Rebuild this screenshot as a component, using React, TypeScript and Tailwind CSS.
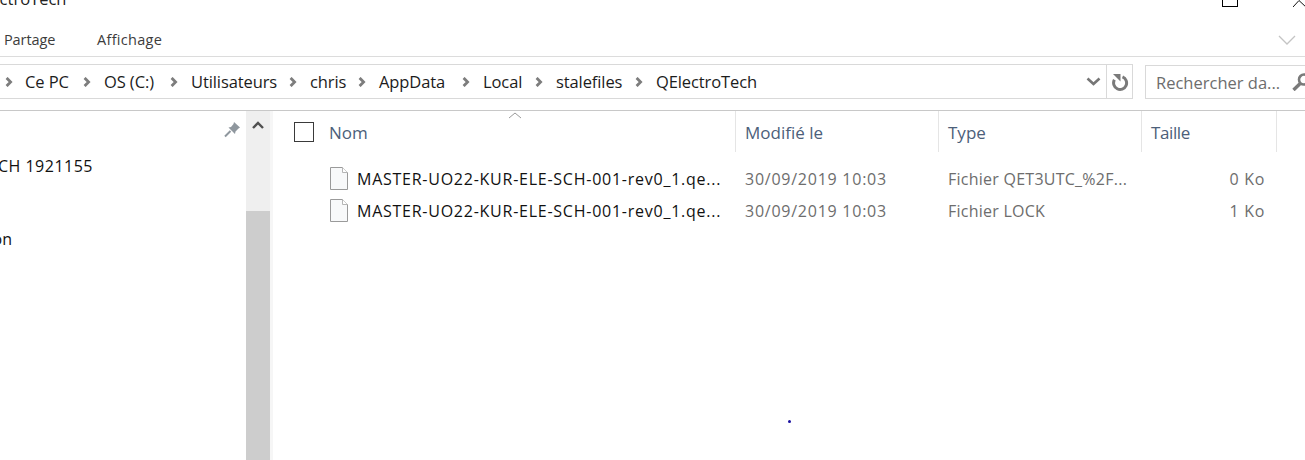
import { ReactNode } from "react";

const crumbs = [
  { label: "Ce PC", width: "w-[79px]" },
  { label: "OS (C:)", width: "w-[87px]" },
  { label: "Utilisateurs", width: "w-[119px]" },
  { label: "chris", width: "w-[69px]" },
  { label: "AppData", width: "w-[104px]" },
  { label: "Local", width: "w-[73px]" },
  { label: "stalefiles", width: "w-[100px]" },
  { label: "QElectroTech", width: "w-[120px]" },
];

const files = [
  { name: "MASTER-UO22-KUR-ELE-SCH-001-rev0_1.qe...", type: "Fichier QET3UTC_%2F...", size: "0 Ko" },
  { name: "MASTER-UO22-KUR-ELE-SCH-001-rev0_1.qe...", type: "Fichier LOCK", size: "1 Ko" },
];

const Chevron = () => (
  <svg width="8" height="10" viewBox="0 0 8 10" className="shrink-0">
    <path d="M1.6 0.9 L5.6 5 L1.6 9.1" fill="none" stroke="#7d7d7d" strokeWidth="2.8" />
  </svg>
);

const FileIcon = () => (
  <svg width="18" height="23" viewBox="0 0 18 23" className="shrink-0">
    <path d="M0.5 0.5 H12.5 L17.5 5.5 V22.5 H0.5 Z" fill="#f8f9fa" stroke="#9a9a9a" />
    <path d="M12.5 0.5 V5.5 H17.5" fill="#fff" stroke="#b5b5b5" />
  </svg>
);

const HeaderCell = ({ width, children }: { width: string; children: ReactNode }) => (
  <div className={`${width} h-[41px] shrink-0 border-r border-[#e5e5e5] pl-[9px] pt-[2px] flex items-center text-[17px] text-[#4c607a]`}>
    {children}
  </div>
);

export default function App() {
  return (
    <div className="relative w-[1305px] h-[460px] overflow-hidden bg-white flex flex-col text-[16px] font-['Open_Sans','Noto_Sans',sans-serif] text-black">
      {/* title bar, cut by the top of the crop */}
      <div className="h-[22px] shrink-0 relative overflow-hidden">
        <span className="absolute left-[-23px] top-[-13px] text-[16.5px] text-[#222]">ElectroTech</span>
        <div className="absolute left-[1222px] top-[-8px] w-[16px] h-[15px] border border-black" />
        <svg width="14" height="8" viewBox="0 0 14 8" className="absolute left-[1293px] top-0">
          <path d="M0 7 L6 0.5 M6 0.5 L14 8" stroke="#111" fill="none" />
        </svg>
      </div>

      {/* ribbon tabs */}
      <div className="h-[35px] shrink-0 border-b border-[#dcdcdc] flex items-center pl-[4px] pt-[2px] text-[14.5px] text-[#3c3c3c]">
        <span className="w-[93px] tracking-[-0.1px]">Partage</span>
        <span className="tracking-[0.3px]">Affichage</span>
        <svg width="18" height="10" viewBox="0 0 18 10" className="ml-auto mr-[9px]">
          <path d="M1 1 L9 9 L17 1" fill="none" stroke="#c4c4c4" strokeWidth="1.3" />
        </svg>
      </div>

      {/* address and search */}
      <div className="h-[54px] shrink-0 border-b border-[#c8c8c8] flex items-start pt-[7px]">
        <div className="w-[1133px] h-[35px] border border-l-0 border-[#d9d9d9] flex items-center shrink-0 text-[16.5px] tracking-[-0.1px]">
          <div className="pl-[5px] w-[25px] flex items-center shrink-0">
            <Chevron />
          </div>
          {crumbs.map((c, i) => (
            <div key={c.label} className={`${c.width} flex items-center shrink-0 text-[#1c1c1c]`}>
              <span className="whitespace-nowrap pt-[2px]">{c.label}</span>
              {i < crumbs.length - 1 && (
                <span className="ml-auto mr-[13px] flex">
                  <Chevron />
                </span>
              )}
            </div>
          ))}
          <svg width="15" height="9" viewBox="0 0 15 9" className="ml-auto mr-[5px]">
            <path d="M1.5 1.5 L7.5 7 L13.5 1.5" fill="none" stroke="#767676" strokeWidth="2.6" />
          </svg>
          <div className="w-[26px] h-full border-l border-[#d9d9d9] flex items-center justify-center pl-[1px]">
            <svg width="18" height="18" viewBox="0 0 18 18">
              <path d="M11.5 3.9 A6.5 6.5 0 1 1 3.4 6.8" fill="none" stroke="#7a7a7a" strokeWidth="3" />
              <path d="M2 1 H9.5 V8.5 Z" fill="#7a7a7a" />
            </svg>
          </div>
        </div>
        <div className="ml-[12px] flex-1 h-[34px] mt-[1px] border border-r-0 border-[#d9d9d9] flex items-center pl-[10px] text-[16.5px] text-[#6d6d6d] overflow-hidden">
          <span className="whitespace-nowrap pt-[2px]">Rechercher da...</span>
          <svg width="16" height="18" viewBox="0 0 16 18" className="ml-[12px] shrink-0">
            <circle cx="12" cy="6.5" r="5" fill="none" stroke="#7a7a7a" strokeWidth="2.6" />
            <path d="M8.2 10.5 L1.5 17" stroke="#7a7a7a" strokeWidth="3.4" />
          </svg>
        </div>
      </div>

      {/* body */}
      <div className="flex-1 flex min-h-0">
        {/* navigation pane */}
        <div className="w-[246px] shrink-0 relative overflow-hidden">
          <svg width="17" height="17" viewBox="0 0 17 17" className="absolute left-[224px] top-[10px]">
            <path d="M10 1 L16 6.5 L14.5 7.5 L11.5 10.5 L11 13 L4.5 6.5 L7 6 L9.5 3 Z" fill="#8f979e" />
            <path d="M6.5 10 L1 15.5" stroke="#8f979e" strokeWidth="2" />
          </svg>
          <div className="pt-[44px] flex flex-col whitespace-nowrap text-[#111]">
            <div className="w-[93px] h-[22px] leading-[22px] flex justify-end tracking-[0.5px]">SCH 1921155</div>
            <div className="w-[12px] h-[22px] leading-[22px] mt-[51px] flex justify-end">tion</div>
          </div>
        </div>

        {/* scrollbar */}
        <div className="w-[24px] shrink-0 bg-[#efefef] flex flex-col">
          <div className="h-[100px] flex justify-center pt-[10px]">
            <svg width="12" height="8" viewBox="0 0 12 8">
              <path d="M1 7 L6 2 L11 7" fill="none" stroke="#505050" strokeWidth="2.4" />
            </svg>
          </div>
          <div className="flex-1 bg-[#cdcdcd]" />
        </div>
        <div className="w-[3px] shrink-0 bg-[#f6f6f6]" />

        {/* file list */}
        <div className="flex-1 min-w-0 flex flex-col">
          <div className="flex relative">
            <div className="w-[463px] h-[41px] shrink-0 border-r border-[#e5e5e5] flex items-center pl-[21px] text-[17px] text-[#4c607a]">
              <div className="w-[20px] h-[20px] border border-[#3a3a3a] shrink-0" />
              <span className="ml-[15px] pt-[2px]">Nom</span>
              <svg width="14" height="7" viewBox="0 0 14 7" className="absolute left-[235px] top-[1px]">
                <path d="M1 6 L7 1 L13 6" fill="none" stroke="#9a9a9a" />
              </svg>
            </div>
            <HeaderCell width="w-[203px]">Modifié le</HeaderCell>
            <HeaderCell width="w-[203px]">Type</HeaderCell>
            <HeaderCell width="w-[135px]"><span className="tracking-[-0.4px]">Taille</span></HeaderCell>
          </div>
          <div className="pt-[10px] flex flex-col">
            {files.map((f) => (
              <div key={f.type} className="flex items-center h-[32px]">
                <div className="w-[463px] shrink-0 flex items-center pl-[57px]">
                  <FileIcon />
                  <span className="ml-[9px] pt-[2px] whitespace-nowrap tracking-[0.75px] text-[#111]">{f.name}</span>
                </div>
                <div className="w-[203px] shrink-0 pl-[9px] pt-[2px] tracking-[0.75px] text-[#6d6d6d] whitespace-nowrap">30/09/2019 10:03</div>
                <div className="w-[203px] shrink-0 pl-[9px] pt-[2px] tracking-[0.25px] text-[#6d6d6d] whitespace-nowrap">{f.type}</div>
                <div className="w-[123px] shrink-0 pt-[2px] text-right tracking-[0.7px] text-[#6d6d6d] whitespace-nowrap">{f.size}</div>
              </div>
            ))}
          </div>
        </div>
      </div>

      {/* stray pixel in the capture */}
      <div className="absolute left-[788px] top-[420px] w-[3px] h-[3px] rounded-full bg-[#1a10a0]" />
    </div>
  );
}
